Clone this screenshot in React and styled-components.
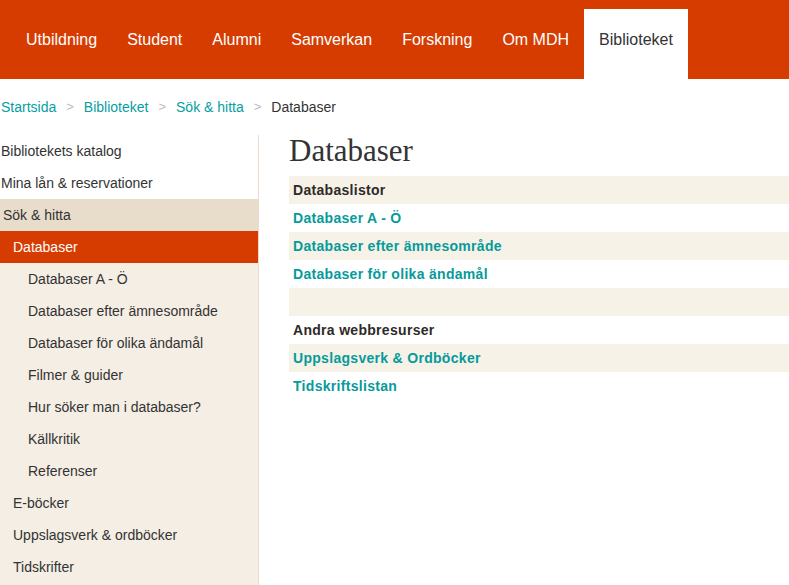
import React from "react";
import styled, { createGlobalStyle } from "styled-components";

const GlobalStyle = createGlobalStyle`
  html, body {
    margin: 0;
    padding: 0;
    background: #fff;
    overflow: hidden;
  }
  body {
    font-family: "Liberation Sans", Arial, sans-serif;
    color: #333;
  }
  a {
    text-decoration: none;
  }
`;

const navItems = ["Utbildning", "Student", "Alumni", "Samverkan", "Forskning", "Om MDH", "Biblioteket"];

const crumbs = ["Startsida", "Biblioteket", "Sök & hitta"];

const subItems = [
  "Databaser A - Ö",
  "Databaser efter ämnesområde",
  "Databaser för olika ändamål",
  "Filmer & guider",
  "Hur söker man i databaser?",
  "Källkritik",
  "Referenser",
];

const rows = [
  { text: "Databaslistor", head: true },
  { text: "Databaser A - Ö" },
  { text: "Databaser efter ämnesområde" },
  { text: "Databaser för olika ändamål" },
  { text: "" },
  { text: "Andra webbresurser", head: true },
  { text: "Uppslagsverk & Ordböcker" },
  { text: "Tidskriftslistan" },
];

export default function App() {
  return (
    <>
      <GlobalStyle />
      <Header>
        {navItems.map((n) => (
          <NavItem key={n} $active={n === "Biblioteket"}>{n}</NavItem>
        ))}
      </Header>

      <Breadcrumbs>
        {crumbs.map((c) => (
          <React.Fragment key={c}>
            <Crumb href="#">{c}</Crumb>
            <Sep>&gt;</Sep>
          </React.Fragment>
        ))}
        <Current>Databaser</Current>
      </Breadcrumbs>

      <Layout>
        <Sidebar>
          <SideItem $indent={1}>Bibliotekets katalog</SideItem>
          <SideItem $indent={1}>Mina lån &amp; reservationer</SideItem>
          <SideItem $indent={3} $bg="#e8ddcb">Sök &amp; hitta</SideItem>
          <SubList>
            <SideItem $indent={13} $active>Databaser</SideItem>
            {subItems.map((s) => (
              <SideItem key={s} $indent={28}>{s}</SideItem>
            ))}
            <SideItem $indent={13}>E-böcker</SideItem>
            <SideItem $indent={13}>Uppslagsverk &amp; ordböcker</SideItem>
            <SideItem $indent={13}>Tidskrifter</SideItem>
          </SubList>
        </Sidebar>

        <Main>
          <Title>Databaser</Title>
          <Table>
            {rows.map((r, i) => (
              <Row key={i} $striped={i % 2 === 0} $head={r.head}>
                {r.text}
              </Row>
            ))}
          </Table>
        </Main>
      </Layout>
    </>
  );
}

const Header = styled.nav`
  display: flex;
  align-items: flex-end;
  height: 79px;
  padding-left: 11px;
  background: #d63c00;
`;

const NavItem = styled.a`
  height: 70px;
  box-sizing: border-box;
  padding: 21px 15px 0 15px;
  font-size: 16px;
  line-height: 20px;
  color: ${(p) => (p.$active ? "#333" : "#fff")};
  background: ${(p) => (p.$active ? "#fff" : "transparent")};
  cursor: pointer;
`;

const Breadcrumbs = styled.div`
  display: flex;
  align-items: center;
  padding: 18px 0 18px 1px;
  font-size: 14px;
  line-height: 20px;
`;

const Crumb = styled.a`
  color: #069ea3;
`;

const Sep = styled.span`
  color: #bbb;
  padding: 0 10px;
  font-size: 13px;
`;

const Current = styled.span`
  color: #333;
`;

const Layout = styled.div`
  display: flex;
  align-items: flex-start;
`;

const Sidebar = styled.aside`
  width: 258px;
  flex-shrink: 0;
  border-right: 1px solid #ecdccb;
`;

const SubList = styled.div`
  background: #f5eee4;
  padding-bottom: 12px;
`;

const SideItem = styled.div`
  height: 32px;
  line-height: 32px;
  font-size: 14px;
  padding-left: ${(p) => p.$indent}px;
  color: ${(p) => (p.$active ? "#fff" : "#333")};
  background: ${(p) => (p.$active ? "#d63c00" : p.$bg || "transparent")};
  white-space: nowrap;
`;

const Main = styled.main`
  flex: 1;
  padding-left: 30px;
`;

const Title = styled.h1`
  margin: 0;
  font-family: "Liberation Serif", "Times New Roman", serif;
  font-weight: normal;
  font-size: 31px;
  line-height: 32px;
  color: #333;
`;

const Table = styled.div`
  margin-top: 9px;
  display: flex;
  flex-direction: column;
`;

const Row = styled.div`
  height: 28px;
  line-height: 28px;
  padding: 0 4px;
  font-size: 14px;
  font-weight: bold;
  letter-spacing: 0.3px;
  background: ${(p) => (p.$striped ? "#f6f2e7" : "#fff")};
  color: ${(p) => (p.$head ? "#2e2a28" : "#079a9a")};
  white-space: nowrap;
`;
